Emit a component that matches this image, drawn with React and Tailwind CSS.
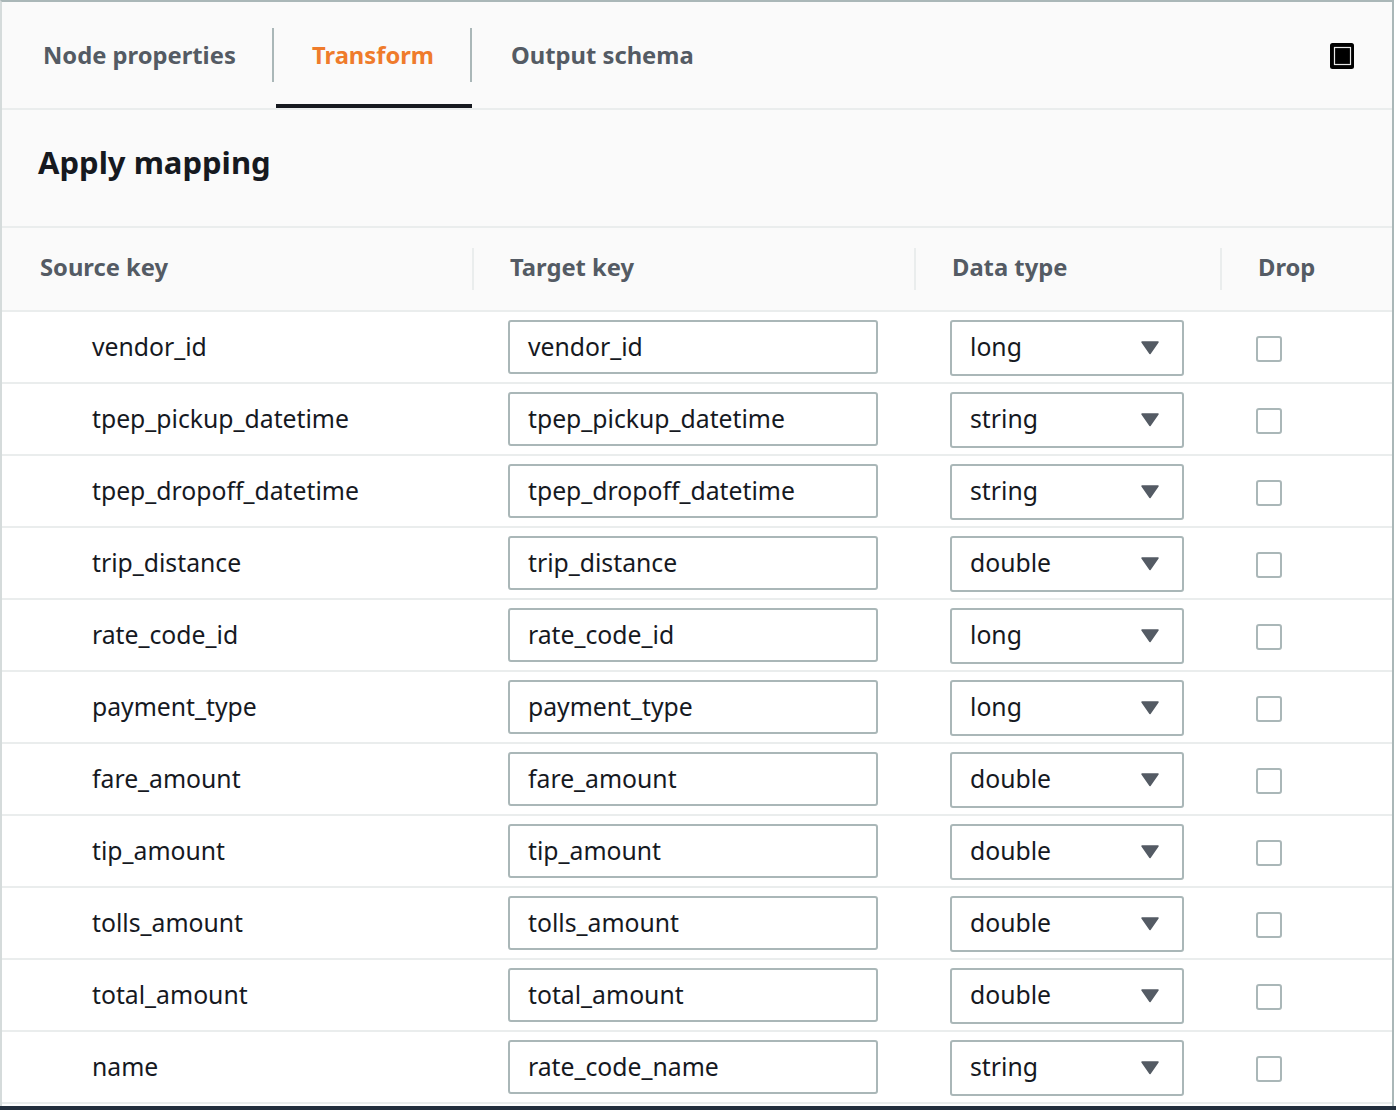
const rows = [
  ["vendor_id", "vendor_id", "long"],
  ["tpep_pickup_datetime", "tpep_pickup_datetime", "string"],
  ["tpep_dropoff_datetime", "tpep_dropoff_datetime", "string"],
  ["trip_distance", "trip_distance", "double"],
  ["rate_code_id", "rate_code_id", "long"],
  ["payment_type", "payment_type", "long"],
  ["fare_amount", "fare_amount", "double"],
  ["tip_amount", "tip_amount", "double"],
  ["tolls_amount", "tolls_amount", "double"],
  ["total_amount", "total_amount", "double"],
  ["name", "rate_code_name", "string"],
];

function Caret() {
  return (
    <svg width="20" height="16" viewBox="0 0 20 16" className="block">
      <path d="M2 2 H18 L10 13.5 Z" fill="#545b64" stroke="#545b64" strokeWidth="1.5" strokeLinejoin="round" />
    </svg>
  );
}

function Row({ source, target, type }) {
  return (
    <div className="flex h-[72px] items-start border-b-2 border-[#eaeded] bg-white pt-2 text-[24.75px] leading-[54px] text-[#16191f]">
      <div className="w-[506px] pl-[90px]">{source}</div>
      <div className="w-[442px]">
        <div className="h-[54px] w-[370px] rounded-[3px] border-2 border-[#aab7b8] bg-white pl-[18px] leading-[50px]">{target}</div>
      </div>
      <div className="w-[306px]">
        <div className="flex h-[56px] w-[234px] items-center justify-between rounded-[3px] border-2 border-[#aab7b8] bg-white pb-[3px] pl-[18px] pr-[22px] leading-[48px]">
          <span>{type}</span>
          <span className="mt-[3px]"><Caret /></span>
        </div>
      </div>
      <div className="mt-4 h-[26px] w-[26px] rounded-[3px] border-2 border-[#aab7b8] bg-white" />
    </div>
  );
}

export default function App() {
  return (
    <div className="flex h-[1110px] w-[1396px] flex-col overflow-hidden bg-white font-['Noto_Sans',sans-serif]">
      <div className="flex h-[1106px] w-[1394px] flex-col border-l-2 border-r-2 border-t-2 border-l-[#d5dbdb] border-r-[#aab7b8] border-t-[#aab7b8] bg-white">
        <div className="flex h-[108px] shrink-0 items-start border-b-2 border-[#eaeded] bg-[#fafafa] text-[23.75px] font-bold leading-[32px] text-[#545b64]">
          <div className="mt-[26px] flex h-[54px] w-[272px] items-center border-r-2 border-[#aab7b8] pb-[1px] pl-[41px]">Node properties</div>
          <div className="ml-[2px] flex h-[106px] w-[196px] flex-col border-b-4 border-[#16191f]">
            <div className="mt-[26px] flex h-[54px] items-center justify-center border-r-2 border-[#aab7b8] pb-[1px] text-[#ef7b2b]">Transform</div>
          </div>
          <div className="mt-[26px] flex h-[54px] flex-1 items-center justify-between pb-[1px] pl-[39px] pr-[38px]">
            <span>Output schema</span>
            <svg width="24" height="26" viewBox="0 0 24 26" className="mt-[3px] block">
              <rect width="24" height="26" rx="2.5" fill="#000" />
              <rect x="4.5" y="4.5" width="16" height="17" fill="#000" stroke="#e8e8e8" strokeWidth="1.2" />
            </svg>
          </div>
        </div>
        <div className="flex h-[118px] shrink-0 items-center border-b-2 border-[#eaeded] bg-[#fafafa] pb-[12px] pl-[36px] text-[31px] font-bold text-[#16191f]">Apply mapping</div>
        <div className="flex h-[84px] shrink-0 items-center border-b-2 border-[#eaeded] bg-[#fafafa] text-[23.75px] font-bold text-[#545b64]">
          <div className="h-[42px] w-[472px] border-r-2 border-[#eaeded] pl-[38px] leading-[38px]">Source key</div>
          <div className="h-[42px] w-[442px] border-r-2 border-[#eaeded] pl-[36px] leading-[38px]">Target key</div>
          <div className="h-[42px] w-[306px] border-r-2 border-[#eaeded] pl-[36px] leading-[38px]">Data type</div>
          <div className="h-[42px] pl-[36px] leading-[38px]">Drop</div>
        </div>
        {rows.map((r) => (
          <Row key={r[0]} source={r[0]} target={r[1]} type={r[2]} />
        ))}
      </div>
      <div className="h-1 bg-[#232f3e]" />
    </div>
  );
}
